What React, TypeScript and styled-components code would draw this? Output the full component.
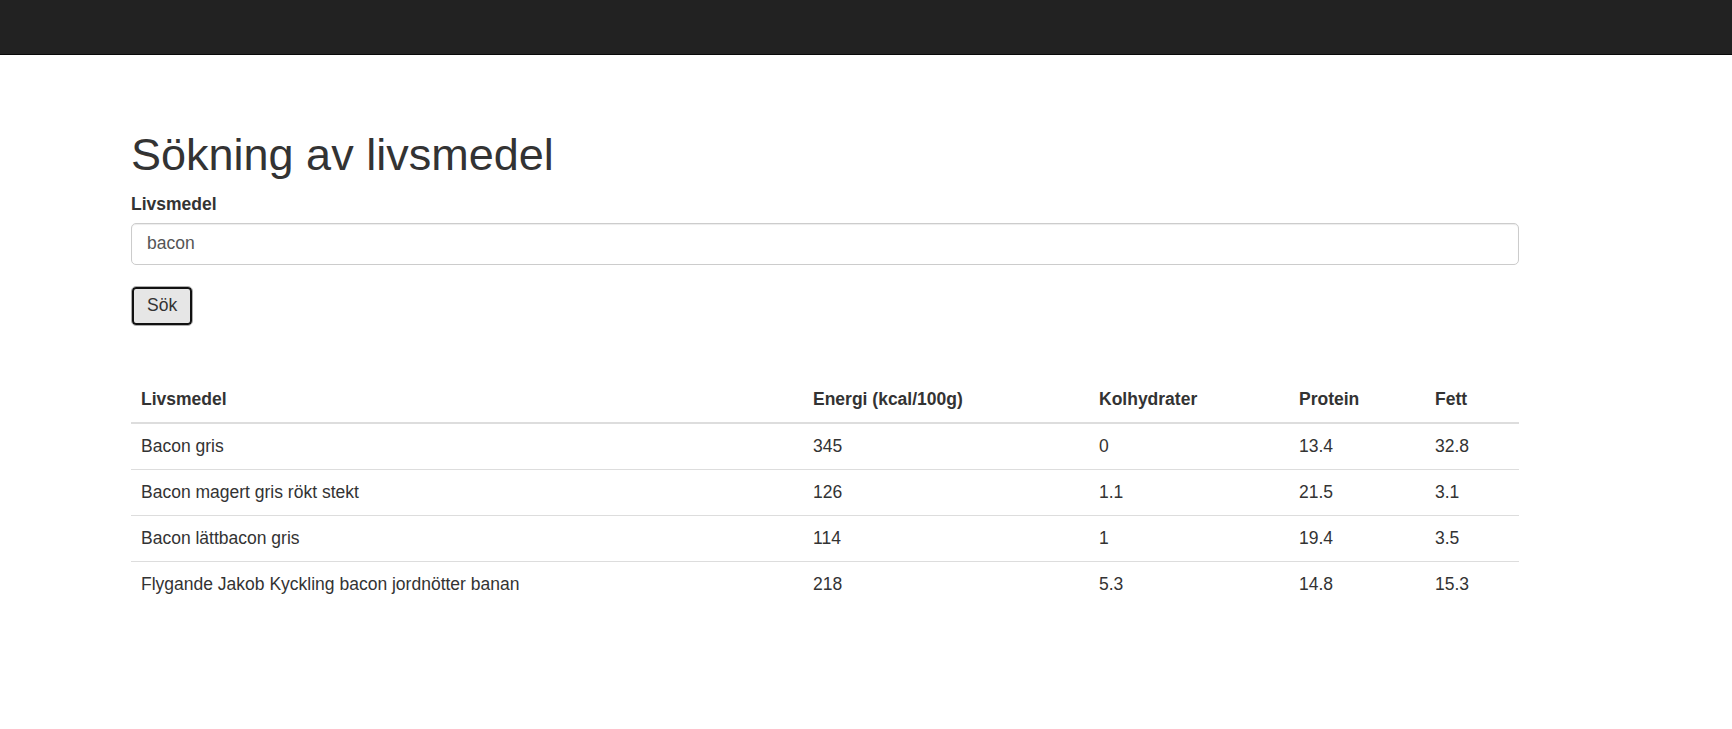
import React from "react";
import styled, { createGlobalStyle } from "styled-components";

const GlobalStyle = createGlobalStyle`
  html, body {
    margin: 0;
    padding: 0;
    background: #fff;
  }
  body {
    font-family: "Liberation Sans", Arial, Helvetica, sans-serif;
    font-size: 17.5px;
    line-height: 25px;
    color: #333;
  }
  * { box-sizing: border-box; }
`;

const Navbar = styled.header`
  height: 55px;
  background: #222;
  border-bottom: 1px solid #080808;
`;

const Container = styled.main`
  width: 1388px;
  margin-left: 131px;
  padding-top: 75px;
`;

const Title = styled.h1`
  margin: 0;
  font-size: 45px;
  line-height: 49.5px;
  font-weight: 500;
  color: #333;
`;

const Label = styled.label`
  display: block;
  margin-top: 12px;
  font-weight: 700;
  line-height: 25px;
`;

const Input = styled.input`
  display: block;
  width: 100%;
  height: 42px;
  margin-top: 6px;
  padding: 0 15px;
  font-family: inherit;
  font-size: 17.5px;
  color: #555;
  background: #fff;
  border: 1px solid #ccc;
  border-radius: 5px;
  box-shadow: inset 0 1px 1px rgba(0, 0, 0, 0.075);
  outline: none;
`;

const Button = styled.button`
  display: block;
  height: 40px;
  margin-top: 21px;
  padding: 0 15px;
  font-family: inherit;
  font-size: 17.5px;
  color: #333;
  background: #e6e6e6;
  border: 1px solid #adadad;
  border-radius: 5px;
  box-shadow: inset 0 0 0 2px #111;
  cursor: pointer;
`;

const Table = styled.table`
  width: 100%;
  margin-top: 51px;
  border-collapse: collapse;
  table-layout: fixed;
`;

const Th = styled.th<{ $w: number }>`
  width: ${(p) => p.$w}px;
  text-align: left;
  font-weight: 700;
  padding: 10px;
  line-height: 25px;
  border-bottom: 2px solid #ddd;
`;

const Td = styled.td`
  padding: 10px;
  line-height: 25px;
  border-top: 1px solid #ddd;
`;

const columns: [string, number][] = [
  ["Livsmedel", 672],
  ["Energi (kcal/100g)", 286],
  ["Kolhydrater", 200],
  ["Protein", 136],
  ["Fett", 94],
];

const rows = [
  ["Bacon gris", "345", "0", "13.4", "32.8"],
  ["Bacon magert gris rökt stekt", "126", "1.1", "21.5", "3.1"],
  ["Bacon lättbacon gris", "114", "1", "19.4", "3.5"],
  ["Flygande Jakob Kyckling bacon jordnötter banan", "218", "5.3", "14.8", "15.3"],
];

export default function App() {
  return (
    <>
      <GlobalStyle />
      <Navbar />
      <Container>
        <Title>Sökning av livsmedel</Title>
        <Label htmlFor="food">Livsmedel</Label>
        <Input id="food" defaultValue="bacon" />
        <Button type="button">Sök</Button>
        <Table>
          <thead>
            <tr>
              {columns.map(([name, w]) => (
                <Th key={name} $w={w}>
                  {name}
                </Th>
              ))}
            </tr>
          </thead>
          <tbody>
            {rows.map((r) => (
              <tr key={r[0]}>
                {r.map((c, i) => (
                  <Td key={i}>{c}</Td>
                ))}
              </tr>
            ))}
          </tbody>
        </Table>
      </Container>
    </>
  );
}
